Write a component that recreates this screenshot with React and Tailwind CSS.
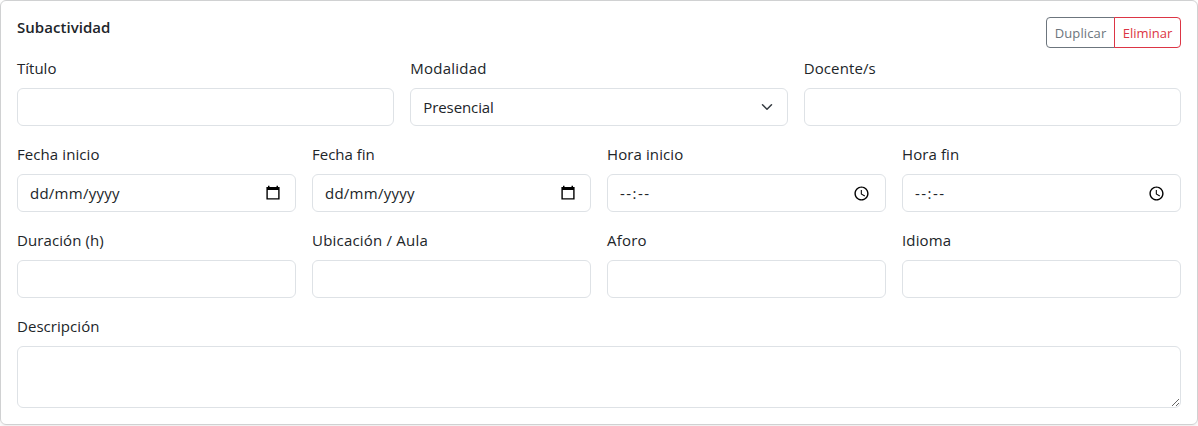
const control =
  'flex h-[38px] w-full items-center justify-between rounded-md border border-[#dee2e6] bg-white text-[#212529]';

function Field({ label, tracking = '', children }) {
  return (
    <div>
      <div className="mb-2 h-6 leading-6">
        <span className={tracking}>{label}</span>
      </div>
      {children || <input type="text" aria-label={label} className={control + ' px-3'} />}
    </div>
  );
}

function ChevronIcon() {
  return (
    <svg width="16" height="12" viewBox="0 0 16 16" fill="none" stroke="#343a40" strokeWidth="2" strokeLinecap="round" strokeLinejoin="round">
      <path d="m2 5 6 6 6-6" />
    </svg>
  );
}

function CalendarIcon() {
  return (
    <svg width="16" height="16" viewBox="0 0 16 16" fill="#000">
      <path fillRule="evenodd" d="M3 .8h1.5V2h7V.8H13V2h1.6v12.6H1.4V2H3zM2.8 5v8.3h10.4V5z" />
    </svg>
  );
}

function ClockIcon() {
  return (
    <svg width="17" height="17" viewBox="0 0 24 24" fill="#000">
      <path d="M11.99 2C6.47 2 2 6.48 2 12s4.47 10 9.99 10C17.52 22 22 17.52 22 12S17.52 2 11.99 2zM12 20c-4.42 0-8-3.58-8-8s3.58-8 8-8 8 3.58 8 8-3.58 8-8 8zm.5-13H11v6l5.25 3.15.75-1.23-4.5-2.67z" />
    </svg>
  );
}

function DateControl() {
  return (
    <div className={control + ' pr-[14px] pl-3'}>
      <span className="tracking-[0.25px]">dd/mm/yyyy</span>
      <CalendarIcon />
    </div>
  );
}

function TimeControl() {
  return (
    <div className={control + ' pr-[15px] pl-3'}>
      <span className="tracking-[1.45px]">--:--</span>
      <ClockIcon />
    </div>
  );
}

export default function App() {
  return (
    <div className="h-[426px] overflow-hidden bg-white font-['Open_Sans','Noto_Sans',sans-serif] text-[15px] text-[#212529]">
      <section className="h-[425px] rounded-md border border-[#d0d1d2] p-4 shadow-[0_2px_4px_rgba(0,0,0,0.075)]">
        <header className="mb-2 flex h-[31px] items-start justify-between">
          <h2 className="leading-5 font-semibold tracking-[0.04px]">Subactividad</h2>
          <div className="flex text-[13px]">
            <button className="flex h-[31px] w-[69px] items-center justify-center rounded-l border border-[#6c757d] pt-0.5 text-[#6c757d]"><span className="tracking-[0.12px]">Duplicar</span></button>
            <button className="-ml-px flex h-[31px] w-[67px] items-center justify-center rounded-r border border-[#dc3545] pt-0.5 text-[#dc3545]"><span>Eliminar</span></button>
          </div>
        </header>
        <div className="flex flex-col gap-4">
          <div className="grid grid-cols-3 gap-4">
            <Field label="Título" />
            <Field label="Modalidad" tracking="tracking-[0.22px]">
              <div className={control + ' px-3'}>
                <span className="tracking-[-0.1px]">Presencial</span>
                <ChevronIcon />
              </div>
            </Field>
            <Field label="Docente/s" tracking="tracking-[0.12px]" />
          </div>
          <div className="grid grid-cols-4 gap-4">
            <Field label="Fecha inicio" tracking="tracking-[0.08px]"><DateControl /></Field>
            <Field label="Fecha fin"><DateControl /></Field>
            <Field label="Hora inicio" tracking="tracking-[0.1px]"><TimeControl /></Field>
            <Field label="Hora fin" tracking="tracking-[0.1px]"><TimeControl /></Field>
          </div>
          <div className="grid grid-cols-4 gap-4">
            <Field label="Duración (h)" tracking="tracking-[0.1px]" />
            <Field label="Ubicación / Aula" tracking="tracking-[0.2px]" />
            <Field label="Aforo" tracking="tracking-[0.2px]" />
            <Field label="Idioma" tracking="tracking-[0.15px]" />
          </div>
          <Field label="Descripción" tracking="tracking-[0.05px]">
            <textarea aria-label="Descripción" className="block h-[62px] w-full resize-y rounded-md border border-[#dee2e6] bg-white px-3 py-1.5" />
          </Field>
        </div>
      </section>
    </div>
  );
}
